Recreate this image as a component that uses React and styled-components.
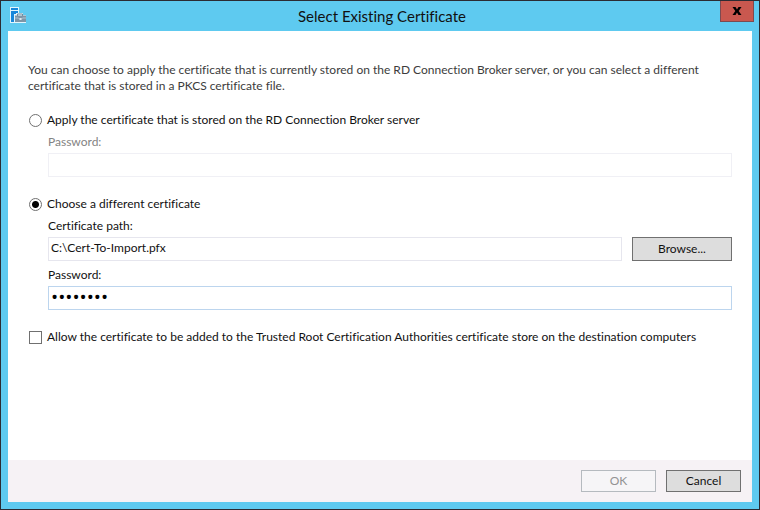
import React, { useState } from 'react';
import styled, { createGlobalStyle } from 'styled-components';

const GlobalStyle = createGlobalStyle`
    * {
        box-sizing: border-box;
    }
    body {
        margin: 0;
        font-family: Lato, 'Open Sans', sans-serif;
        font-size: 12px;
        font-variant-ligatures: none;
        line-height: 16px;
        color: #111111;
    }
    button, input {
        font: inherit;
        color: inherit;
    }
`;

const Window = styled.div`
    min-height: 100vh;
    display: flex;
    flex-direction: column;
    border: 1px solid #2b2b33;
    background: #5ecaf0;
`;

const TitleBar = styled.header`
    display: grid;
    grid-template-columns: 34px 1fr 34px;
    height: 30px;
    padding: 0 5px 0 9px;
`;

const TitleIcon = styled.svg`
    width: 18px;
    height: 18px;
    margin-top: 5px;
`;

const Title = styled.h1`
    margin: 0;
    font-size: 15px;
    font-weight: 400;
    line-height: 30px;
    text-align: center;
`;

const CloseButton = styled.button`
    display: flex;
    align-items: center;
    justify-content: center;
    height: 21px;
    padding: 0;
    border: 1px solid #7d4a50;
    border-top: 0;
    background: #c9584f;
`;

const Dialog = styled.div`
    flex: 1;
    display: flex;
    flex-direction: column;
    margin: 0 7px 7px;
`;

const Content = styled.main`
    flex: 1;
    padding: 31px 20px 24px;
    background: #ffffff;
`;

const Intro = styled.p`
    max-width: 690px;
    margin: 0 0 18px;
    color: #3c3c3c;
`;

const Group = styled.section`
    margin-bottom: 19px;
`;

const Choice = styled.label`
    display: flex;
    align-items: center;
    gap: 5px;
    width: fit-content;
    padding-left: 1px;
`;

const Radio = styled.input`
    appearance: none;
    flex: none;
    width: 13px;
    height: 13px;
    margin: 0;
    border: 1px solid #707070;
    border-radius: 50%;
    background: #ffffff;

    &:checked {
        background: radial-gradient(circle, #000000 3px, #ffffff 4px);
    }
`;

const Checkbox = styled.input`
    appearance: none;
    flex: none;
    width: 13px;
    height: 13px;
    margin: 0;
    border: 1px solid #707070;
    background: #ffffff;

    &:checked {
        background: #707070;
        box-shadow: inset 0 0 0 2px #ffffff;
    }
`;

const Fields = styled.div`
    display: flex;
    flex-direction: column;
    gap: 6px;
    padding: 6px 0 0 20px;
`;

const Field = styled.div`
    display: flex;
    flex-direction: column;
    gap: 3px;
`;

const FieldLabel = styled.label`
    color: ${({ $disabled }) => ($disabled ? '#838383' : '#111111')};
`;

const FieldRow = styled.div`
    display: flex;
    gap: 10px;
`;

const TextBox = styled.input`
    flex: 1;
    min-width: 0;
    height: 24px;
    padding: 0 2px 4px;
    border: 1px solid #e6e6ee;
    border-radius: 0;
    background: #ffffff;
    outline: none;

    &:disabled {
        border-color: #f0f0f5;
    }
`;

const PasswordBox = styled(TextBox)`
    padding-bottom: 2px;
    border-color: #bcd5ee;
    font-family: 'Open Sans', sans-serif;
    font-size: 19px;
    color: #000000;
`;

const Button = styled.button`
    width: ${({ $wide }) => ($wide ? '100px' : '75px')};
    height: ${({ $wide }) => ($wide ? '24px' : '22px')};
    padding: 0;
    border: 1px solid #707070;
    background: #dddddd;

    &:disabled {
        border-color: #b5babf;
        background: #f6f5f7;
        color: #939393;
    }
`;

const Footer = styled.footer`
    display: flex;
    justify-content: flex-end;
    gap: 10px;
    padding: 10px 11px;
    background: #f6f2f5;
`;

const WindowIcon = () => (
    <TitleIcon viewBox="0 0 18 18" aria-hidden="true">
        <path d="M0 1h9v6h4v2h3v8H0z" fill="#e2f5fd" />
        <path d="M1 2h7v2H1zM1 5h7v2H6v1H4v8H1z" fill="#1787da" />
        <path d="M7.500 10V8h5v2" fill="none" stroke="#71889a" />
        <path d="M5 9.500h11V16H5z" fill="#7d95a7" />
        <path d="M5 12h3.500l1 1h2l1-1H16" fill="none" stroke="#b9cbd6" strokeWidth="0.8" />
        <path d="M9.500 12h2v2h-2z" fill="#dbe7ee" />
    </TitleIcon>
);

const App = () => {
    const [source, setSource] = useState('file');
    const [storedPassword, setStoredPassword] = useState('');
    const [path, setPath] = useState('C:\\Cert-To-Import.pfx');
    const [password, setPassword] = useState('password');
    const [trusted, setTrusted] = useState(false);

    const useStored = source === 'stored';

    return (
        <>
            <GlobalStyle />
            <Window>
                <TitleBar>
                    <WindowIcon />
                    <Title>Select Existing Certificate</Title>
                    <CloseButton type="button" aria-label="Close">
                        <svg width="10" height="8" viewBox="0 0 10 8" aria-hidden="true">
                            <path d="M0.500 0h3L5 2.500 6.500 0h3L6.700 4l2.800 4h-3L5 5.500 3.500 8h-3l2.800-4z" fill="#000000" />
                        </svg>
                    </CloseButton>
                </TitleBar>
                <Dialog>
                    <Content>
                        <Intro>
                            You can choose to apply the certificate that is currently stored on the RD Connection
                            Broker server, or you can select a different certificate that is stored in a PKCS
                            certificate file.
                        </Intro>

                        <Group>
                            <Choice>
                                <Radio
                                    type="radio"
                                    name="source"
                                    checked={useStored}
                                    onChange={() => setSource('stored')}
                                />
                                Apply the certificate that is stored on the RD Connection Broker server
                            </Choice>
                            <Fields>
                                <Field>
                                    <FieldLabel htmlFor="stored-password" $disabled={!useStored}>Password:</FieldLabel>
                                    <FieldRow>
                                        <PasswordBox
                                            id="stored-password"
                                            type="password"
                                            disabled={!useStored}
                                            value={storedPassword}
                                            onChange={(e) => setStoredPassword(e.target.value)}
                                        />
                                    </FieldRow>
                                </Field>
                            </Fields>
                        </Group>

                        <Group>
                            <Choice>
                                <Radio
                                    type="radio"
                                    name="source"
                                    checked={!useStored}
                                    onChange={() => setSource('file')}
                                />
                                Choose a different certificate
                            </Choice>
                            <Fields>
                                <Field>
                                    <FieldLabel htmlFor="path" $disabled={useStored}>Certificate path:</FieldLabel>
                                    <FieldRow>
                                        <TextBox
                                            id="path"
                                            type="text"
                                            disabled={useStored}
                                            value={path}
                                            onChange={(e) => setPath(e.target.value)}
                                        />
                                        <Button type="button" $wide disabled={useStored}>Browse...</Button>
                                    </FieldRow>
                                </Field>
                                <Field>
                                    <FieldLabel htmlFor="password" $disabled={useStored}>Password:</FieldLabel>
                                    <FieldRow>
                                        <PasswordBox
                                            id="password"
                                            type="password"
                                            disabled={useStored}
                                            value={password}
                                            onChange={(e) => setPassword(e.target.value)}
                                        />
                                    </FieldRow>
                                </Field>
                            </Fields>
                        </Group>

                        <Choice>
                            <Checkbox
                                type="checkbox"
                                checked={trusted}
                                onChange={(e) => setTrusted(e.target.checked)}
                            />
                            Allow the certificate to be added to the Trusted Root Certification Authorities
                            certificate store on the destination computers
                        </Choice>
                    </Content>
                    <Footer>
                        <Button type="button" disabled>OK</Button>
                        <Button type="button">Cancel</Button>
                    </Footer>
                </Dialog>
            </Window>
        </>
    );
};

export default App;
